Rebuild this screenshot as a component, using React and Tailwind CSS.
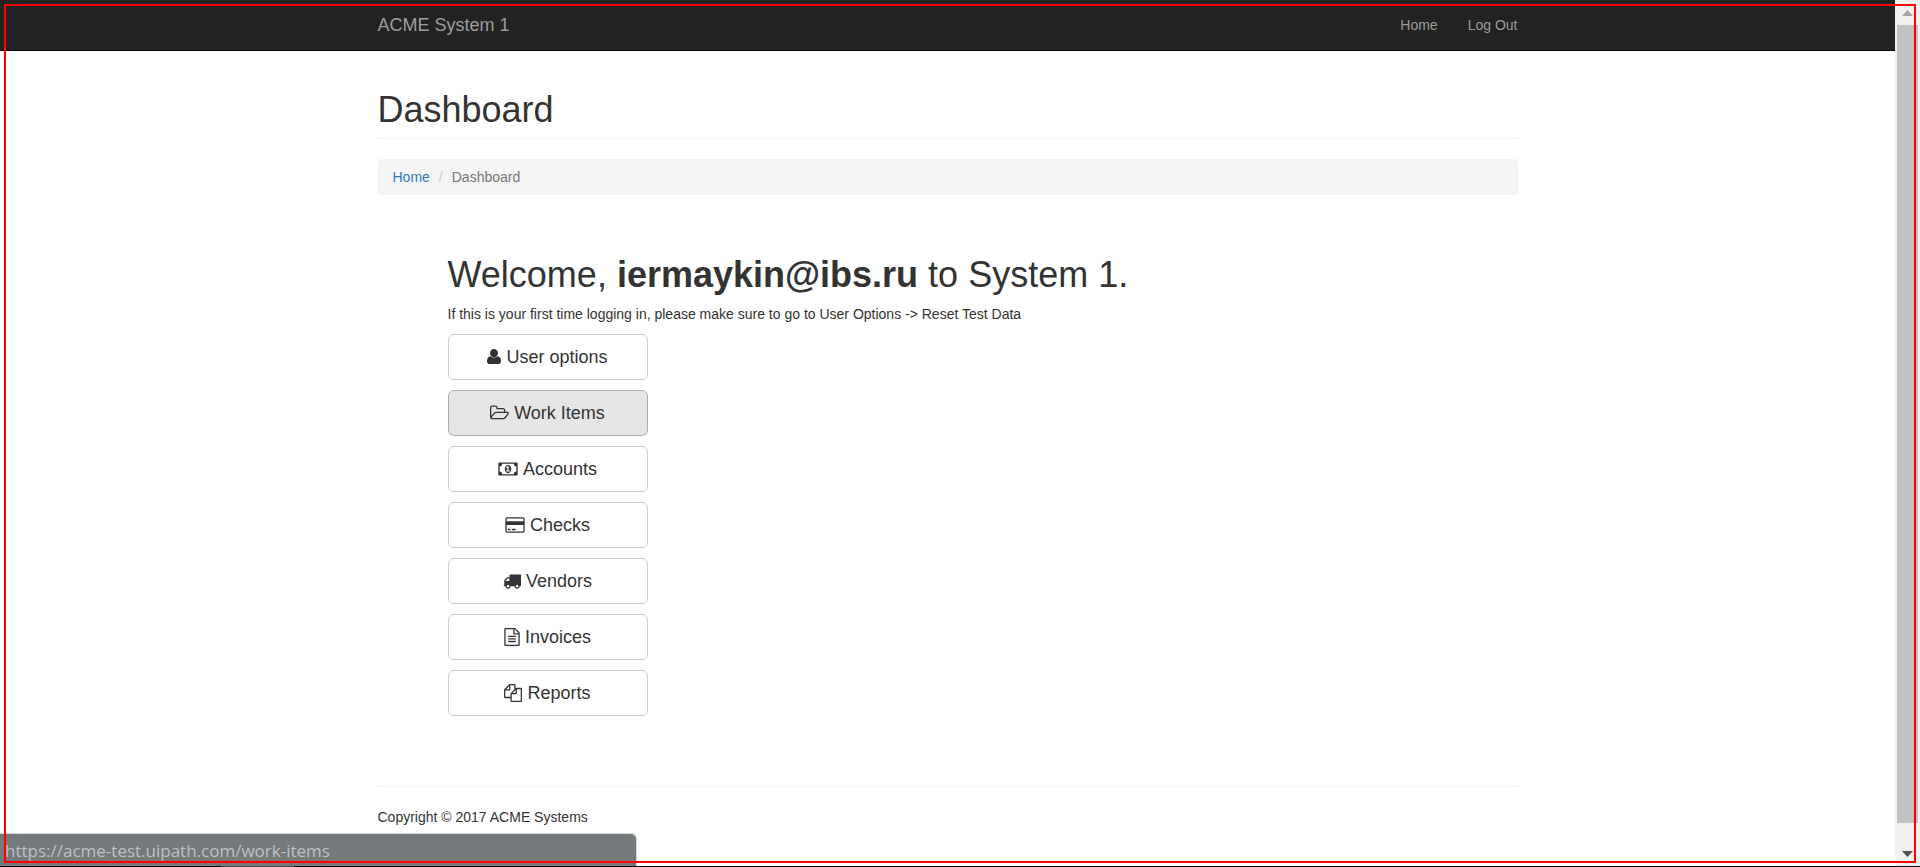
const icons = {
  user: {
    box: "0 0 14 18",
    size: "w-[14px]",
    d: "M7 1C9.300 1 11 2.800 11 5.100S9.300 9.400 7 9.400 3 7.400 3 5.100 4.700 1 7 1zM3.400 8.300C1.100 8.500 0 10.600 0 13.600C0 15.200 1 16 2.300 16H11.700C13 16 14 15.200 14 13.600C14 10.600 12.900 8.500 10.600 8.300C8.600 10.100 5.400 10.100 3.400 8.300z",
  },
  folder: {
    box: "64 0 1920 1792",
    size: "w-[19px]",
    d: "M1845 931q0-35-53-35h-1088q-40 0-85.5 21.5t-71.5 52.5l-294 363q-18 24-18 40 0 35 53 35h1088q40 0 86-22t71-53l294-363q18-22 18-39zm-1141-163h768v-160q0-40-28-68t-68-28h-576q-40 0-68-28t-28-68v-64q0-40-28-68t-68-28h-320q-40 0-68 28t-28 68v853l256-315q44-53 116-87.5t140-34.5zm1269 163q0 62-46 120l-295 363q-43 53-116 87.5t-140 34.5h-1088q-92 0-158-66t-66-158v-960q0-92 66-158t158-66h320q92 0 158 66t66 158v32h544q92 0 158 66t66 158v160h192q54 0 99 24.5t67 70.5q15 32 15 68z",
  },
  money: {
    box: "0 0 1920 1792",
    size: "w-[20px]",
    d: "M768 1152h384v-96h-128v-448h-114l-148 137 77 80q42-37 55-57h2v288h-128v96zm512-256q0 70-21 142t-59.5 134-101.5 101-138 39-138-39-101.5-101-59.5-134-21-142 21-142 59.5-134 101.5-101 138-39 138 39 101.5 101 59.5 134 21 142zm512 256v-512q-106 0-181-75t-75-181h-1152q0 106-75 181t-181 75v512q106 0 181 75t75 181h1152q0-106 75-181t181-75zm128-832v1152q0 26-19 45t-45 19h-1792q-26 0-45-19t-19-45v-1152q0-26 19-45t45-19h1792q26 0 45 19t19 45z",
  },
  card: {
    box: "0 0 1920 1792",
    size: "w-[20px]",
    d: "M1760 128q66 0 113 47t47 113v1216q0 66-47 113t-113 47h-1600q-66 0-113-47t-47-113v-1216q0-66 47-113t113-47h1600zm-1600 128q-13 0-22.5 9.5t-9.5 22.5v224h1664v-224q0-13-9.5-22.5t-22.5-9.5h-1600zm1600 1280q13 0 22.5-9.5t9.5-22.5v-608h-1664v608q0 13 9.5 22.5t22.5 9.5h1600zm-1504-128v-128h256v128h-256zm384 0v-128h384v128h-384z",
  },
  truck: {
    box: "0 0 1792 1792",
    size: "w-[18px]",
    d: "M640 1408q0-52-38-90t-90-38-90 38-38 90 38 90 90 38 90-38 38-90zm-384-512h384v-256h-158q-13 0-22 9l-195 195q-9 9-9 22v30zm1280 512q0-52-38-90t-90-38-90 38-38 90 38 90 90 38 90-38 38-90zm256-1088v1024q0 15-4 26.5t-13.5 18.5-16.5 11.5-23.5 6-22.5 2-25.5 0-22.5-.5q0 106-75 181t-181 75-181-75-75-181h-384q0 106-75 181t-181 75-181-75-75-181h-64q-3 0-22.5.5t-25.5 0-22.5-2-23.5-6-16.5-11.5-13.5-18.5-4-26.5q0-26 19-45t45-19v-320q0-8-.5-35t0-38 2.5-34.5 6.5-37 14-30.5 22.5-30l198-198q19-19 50.5-32t58.5-13h160v-192q0-26 19-45t45-19h1024q26 0 45 19t19 45z",
  },
  file: {
    box: "128 0 1536 1792",
    size: "w-[16px]",
    d: "M1596 380q28 28 48 76t20 88v1152q0 40-28 68t-68 28h-1344q-40 0-68-28t-28-68v-1600q0-40 28-68t68-28h896q40 0 88 20t76 48zm-444-244v376h376q-10-29-22-41l-313-313q-12-12-41-22zm384 1528v-1024h-416q-40 0-68-28t-28-68v-416h-768v1536h1280zm-1024-864q0-14 9-23t23-9h704q14 0 23 9t9 23v64q0 14-9 23t-23 9h-704q-14 0-23-9t-9-23v-64zm736 224q14 0 23 9t9 23v64q0 14-9 23t-23 9h-704q-14 0-23-9t-9-23v-64q0-14 9-23t23-9h704zm0 256q14 0 23 9t9 23v64q0 14-9 23t-23 9h-704q-14 0-23-9t-9-23v-64q0-14 9-23t23-9h704z",
  },
  files: {
    box: "0 0 1792 1792",
    size: "w-[18px]",
    d: "M1696 384q40 0 68 28t28 68v1216q0 40-28 68t-68 28h-960q-40 0-68-28t-28-68v-288h-544q-40 0-68-28t-28-68v-672q0-40 20-88t48-76l408-408q28-28 76-48t88-20h416q40 0 68 28t28 68v328q68-40 128-40h416zm-544 213l-299 299h299v-299zm-640-384l-299 299h299v-299zm196 647l316-316v-416h-384v416q0 40-28 68t-68 28h-416v640h512v-256q0-40 20-88t48-76zm956 804v-1152h-384v416q0 40-28 68t-68 28h-416v640h896z",
  },
};

const menu = [
  { label: "User options", icon: "user" },
  { label: "Work Items", icon: "folder", active: true },
  { label: "Accounts", icon: "money" },
  { label: "Checks", icon: "card" },
  { label: "Vendors", icon: "truck" },
  { label: "Invoices", icon: "file" },
  { label: "Reports", icon: "files" },
];

function Icon({ name }) {
  const { box, size, d } = icons[name];
  return (
    <svg viewBox={box} className={`h-[18px] shrink-0 ${size}`} fill="currentColor" aria-hidden="true">
      <path d={d} />
    </svg>
  );
}

function MenuButton({ label, icon, active }) {
  const tone = active ? "bg-[#e6e6e6] border-[#adadad]" : "bg-white border-[#cccccc]";
  return (
    <button
      type="button"
      className={`flex w-[200px] items-center justify-center gap-[5px] rounded-md border px-4 py-[10px] text-lg leading-6 ${tone}`}
    >
      <Icon name={icon} />
      {label}
    </button>
  );
}

function Navbar() {
  return (
    <header className="border-b border-[#080808] bg-[#222222] text-[#9d9d9d]">
      <nav className="mx-auto flex max-w-[1170px] items-center justify-between px-[15px] py-[15px] leading-5">
        <a href="#home" className="text-lg leading-5">ACME System 1</a>
        <div className="flex gap-[30px]">
          <a href="#home">Home</a>
          <a href="#logout">Log Out</a>
        </div>
      </nav>
    </header>
  );
}

function ScrollTrack() {
  return (
    <div className="flex w-[25px] shrink-0 flex-col items-center bg-[#f0f0f0]" aria-hidden="true">
      <svg viewBox="0 0 11 6" className="mt-[10px] mb-[9px] h-[6px] w-[11px]" fill="#a3a3a3">
        <path d="M5.500 0L11 6H0z" />
      </svg>
      <div className="w-[21px] flex-1 bg-[#c1c1c1]" />
      <svg viewBox="0 0 11 6" className="mt-[28px] mb-[9px] h-[6px] w-[11px]" fill="#505050">
        <path d="M0 0h11L5.500 6z" />
      </svg>
    </div>
  );
}

export default function App() {
  return (
    <div className="relative flex min-h-screen flex-col overflow-hidden bg-white font-['Liberation_Sans',Arial,sans-serif] text-sm leading-5 text-[#333333]">
      <div className="flex flex-1">
        <div className="min-w-0 flex-1">
          <Navbar />
          <div className="mx-auto max-w-[1170px] px-[15px]">
            <h1 className="mt-[39px] mb-5 border-b border-[#eeeeee] pb-2 text-4xl leading-10">Dashboard</h1>
            <nav aria-label="Breadcrumb" className="rounded bg-[#f5f5f5] px-[15px] py-2">
              <ol className="flex">
                <li><a href="#home" className="text-[#337ab7]">Home</a></li>
                <li className="px-[9px] text-[#cccccc]" aria-hidden="true">/</li>
                <li className="text-[#777777]">Dashboard</li>
              </ol>
            </nav>
            <main className="mt-[60px] px-[70px]">
              <h2 className="text-4xl leading-10">
                Welcome, <b>iermaykin@ibs.ru</b> to System 1.
              </h2>
              <p className="mt-[9px] mb-[10px]">
                If this is your first time logging in, please make sure to go to User Options -&gt; Reset Test Data
              </p>
              <div className="flex flex-col gap-[10px]">
                {menu.map((item) => (
                  <MenuButton key={item.label} {...item} />
                ))}
              </div>
            </main>
            <footer className="mt-[70px] border-t border-[#eeeeee] pt-5">Copyright © 2017 ACME Systems</footer>
          </div>
        </div>
        <ScrollTrack />
      </div>
      <div className="flex h-px bg-[#05070c]">
        <div className="ml-[221px] w-[73px] bg-[#404347]" />
      </div>
      <div className="absolute bottom-px left-0 w-[637px] rounded-tr-md border-t border-r border-[#d5d6d7] bg-[#75797c] pt-[5px] pb-[3px] pl-[5px] font-['Open_Sans','Noto_Sans',sans-serif] text-[17px] leading-6 text-[#bdc1c4]">
        https://acme-test.uipath.com/work-items
      </div>
      <div className="pointer-events-none absolute top-1 right-1 bottom-1 left-1 border-2 border-[#ff0000]" />
    </div>
  );
}
